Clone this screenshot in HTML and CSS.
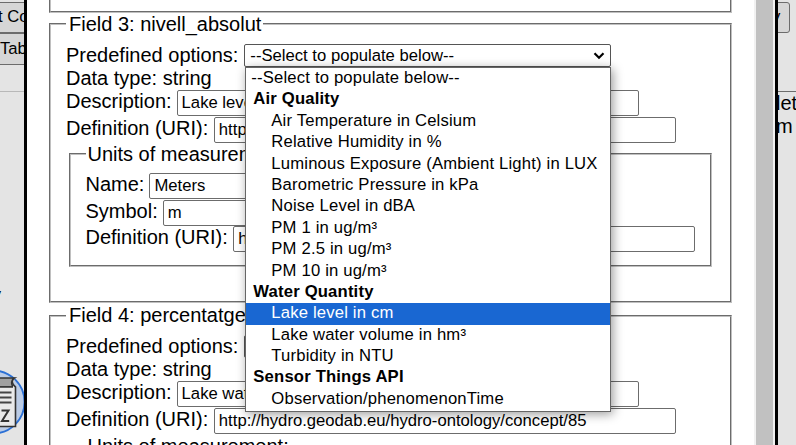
FILE: index.html
```html
<!DOCTYPE html>
<html lang="en">
<head>
<meta charset="utf-8">
<title>Fields</title>
<link rel="stylesheet" href="styles.css">
</head>
<body>
<div class="app">
  <div class="side left">
    <div class="tool first">t Co</div>
    <div class="tool second">Tab</div>
    <div class="canvas">
      <span class="tail">y</span>
      <svg class="node" width="26" height="70" viewBox="0 0 26 70">
        <circle cx="-7" cy="35" r="31.5" fill="#bccce5" stroke="#2b70d5" stroke-width="1.8"/>
        <path d="M-2 11H14.500C11 13 11 17 13 20H-2Z" fill="#a0a0a0" stroke="#333" stroke-width="1.500"/>
        <path d="M14.500 11C11.500 13 11.500 17 15.500 20V59.500H-2V20H13" fill="#e9e9e9" stroke="#333" stroke-width="1.600"/>
        <path d="M-2 25.500H11.500M-2 30.500H11.500M-2 35.500H11.500" stroke="#444" stroke-width="2"/>
        <path d="M1.500 43.500H8.500L2 54H9.200" fill="none" stroke="#333" stroke-width="2"/>
      </svg>
    </div>
  </div>
  <div class="dialog">
    <div class="content">
      <div class="previous"></div>
      <fieldset class="field three">
        <legend>Field 3: nivell_absolut</legend>
        <div class="row choose"><span>Predefined options:</span>
          <div class="select"><span>--Select to populate below--</span>
            <svg width="12" height="8" viewBox="0 0 12 8"><path d="M1.500 1.300L6 5.800L10.500 1.300" fill="none" stroke="#000" stroke-width="2.200"/></svg>
            <div class="menu">
              <div class="opt plain">--Select to populate below--</div>
              <div class="opt group">Air Quality</div>
              <div class="opt">Air Temperature in Celsium</div>
              <div class="opt">Relative Humidity in %</div>
              <div class="opt">Luminous Exposure (Ambient Light) in LUX</div>
              <div class="opt">Barometric Pressure in kPa</div>
              <div class="opt">Noise Level in dBA</div>
              <div class="opt">PM 1 in ug/m³</div>
              <div class="opt">PM 2.5 in ug/m³</div>
              <div class="opt">PM 10 in ug/m³</div>
              <div class="opt group">Water Quantity</div>
              <div class="opt active">Lake level in cm</div>
              <div class="opt">Lake water volume in hm³</div>
              <div class="opt">Turbidity in NTU</div>
              <div class="opt group">Sensor Things API</div>
              <div class="opt">Observation/phenomenonTime</div>
            </div>
          </div>
        </div>
        <div class="row type">Data type: string</div>
        <div class="row desc"><span>Description:</span><div class="input">Lake level</div></div>
        <div class="row def"><span>Definition (URI):</span><div class="input">http://</div></div>
        <fieldset class="units">
          <legend>Units of measurement:</legend>
          <div class="row name"><span>Name:</span><div class="input short">Meters</div></div>
          <div class="row symbol"><span>Symbol:</span><div class="input short">m</div></div>
          <div class="row def"><span>Definition (URI):</span><div class="input">h</div></div>
        </fieldset>
      </fieldset>
      <fieldset class="field four">
        <legend>Field 4: percentatge</legend>
        <div class="row choose"><span>Predefined options:</span><div class="select"></div></div>
        <div class="row type">Data type: string</div>
        <div class="row desc"><span>Description:</span><div class="input">Lake water</div></div>
        <div class="row def"><span>Definition (URI):</span><div class="input">http://hydro.geodab.eu/hydro-ontology/concept/85</div></div>
        <fieldset class="units"><legend>Units of measurement:</legend></fieldset>
      </fieldset>
    </div>
    <div class="scrollbar"></div>
  </div>
  <div class="side right">
    <div class="tool query">y</div>
    <div class="note"><div>let</div><div>m</div></div>
  </div>
</div>
</body>
</html>
```
FILE: styles.css
```css
* { box-sizing: border-box; }
body {
  margin: 0;
  overflow: hidden;
  background: #e4e4e4;
  color: #000;
  font: 20px/23px "Liberation Sans", Arial, sans-serif;
}
.app { display: flex; height: 445px; overflow: hidden; }
.side { overflow: hidden; flex: none; white-space: nowrap; }
.left { width: 24px; }
.right { width: 18px; }
.tool {
  background: #d6d6d6;
  border: 1px solid #6c6c6c;
  font-size: 16.67px;
  line-height: 28px;
}
.first { height: 31px; margin: 2px -4px 0 -4px; padding-left: 1px; }
.second { height: 32px; margin: 0 -4px; padding-left: 3px; line-height: 30px; }
.canvas { margin-top: 26px; border-top: 1px solid #b8b8b8; }
.tail { display: block; height: 23px; margin: 192px 0 0 -9px; }
.node { display: block; margin-top: 60px; }
.query { width: 16px; height: 31px; margin: 2px 0 0 -4px; padding-left: 0; text-indent: -3px; border-radius: 0 3px 3px 0; }
.note { margin-top: 58px; border-top: 1px solid #6c6c6c; white-space: nowrap; text-indent: -2px; }
.dialog {
  display: flex;
  flex: none;
  width: 754px;
  background: #fff;
  border: solid #000;
  border-width: 0 3px;
}
.content { width: 727px; padding: 0 22px; }
.scrollbar {
  width: 21px;
  background: #c1c1c1;
  border: solid #f1f1f1;
  border-width: 0 2px;
}
.previous { height: 13px; width: 683px; border: 2px groove #c0c0c0; border-top: 0; }
fieldset { margin: 0; padding: 0; border: 2px groove #c0c0c0; min-width: 0; }
legend { padding: 0 2px; height: 24px; line-height: 24px; white-space: nowrap; }
.field { width: 683px; padding-left: 15px; }
.field > legend { padding-left: 3px; }
.three { height: 291px; margin-top: -1px; }
.four { height: 300px; margin-top: 1px; }
.four > legend { line-height: 22px; }
.row { display: flex; align-items: flex-start; gap: 5px; white-space: nowrap; }
.row > span { flex: none; }
.choose { height: 23px; margin-top: 8px; gap: 6px; }
.choose > span { line-height: 22px; }
.four .choose { margin-top: 7px; }
.type { height: 23px; }
.select {
  position: relative;
  display: flex;
  align-items: center;
  width: 367px;
  height: 23px;
  padding: 0 6px 0 5px;
  border: 1px solid #555;
  border-radius: 2px;
  font-size: 16.67px;
}
.select > svg { margin-left: auto; margin-right: -1px; }
.menu {
  position: absolute;
  z-index: 2;
  left: 0;
  top: 22px;
  width: 366px;
  height: 345px;
  background: #fff;
  border: 1px solid #666;
  box-shadow: 2px 2px 10px rgba(0, 0, 0, .4);
}
.opt { height: 21.4px; line-height: 20px; padding-left: 25px; letter-spacing: .17px; }
.opt.plain { padding-left: 5px; }
.opt.group { padding-left: 7px; font-weight: bold; }
.opt.active { background: #1967d2; color: #fff; }
.desc, .def, .name, .symbol { height: 26.5px; }
.def { gap: 5.6px; }
.input {
  width: 462px;
  height: 26px;
  padding-left: 4px;
  border: 1px solid #6c6c6c;
  border-radius: 2px;
  font-size: 16.67px;
  line-height: 24px;
}
.input.short { width: 300px; }
.units { width: 643px; height: 125px; margin: -1px 0 0 3px; padding-left: 14.5px; }
.four .units { margin-top: 0; }
.units .name { margin-top: 7px; }
```
